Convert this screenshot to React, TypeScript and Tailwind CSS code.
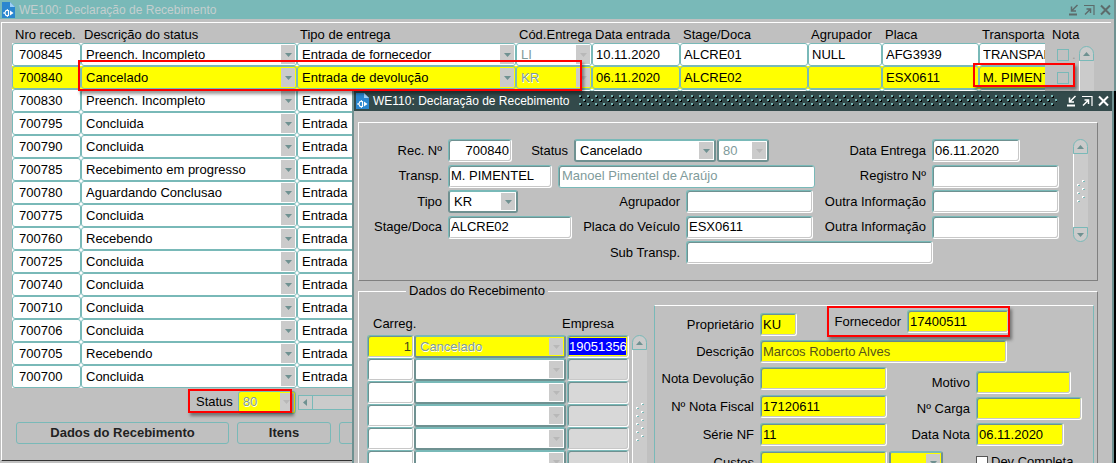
import { ReactNode } from "react";

const RECEIPTS = [
  { id: "700845", status: "Preench. Incompleto", tipo: "Entrada de fornecedor", cod: "LI", data: "10.11.2020", stage: "ALCRE01", agrupador: "NULL", placa: "AFG3939", transp: "TRANSPARANA" },
  { id: "700840", status: "Cancelado", tipo: "Entrada de devolução", cod: "KR", data: "06.11.2020", stage: "ALCRE02", agrupador: "", placa: "ESX0611", transp: "M. PIMENTEL" },
  { id: "700830", status: "Preench. Incompleto" },
  { id: "700795", status: "Concluida" },
  { id: "700790", status: "Concluida" },
  { id: "700785", status: "Recebimento em progresso" },
  { id: "700780", status: "Aguardando Conclusao" },
  { id: "700775", status: "Concluida" },
  { id: "700760", status: "Recebendo" },
  { id: "700725", status: "Concluida" },
  { id: "700740", status: "Concluida" },
  { id: "700710", status: "Concluida" },
  { id: "700706", status: "Concluida" },
  { id: "700705", status: "Recebendo" },
  { id: "700700", status: "Concluida" },
];

const COLUMNS = [
  { title: "Nro receb.", width: "w-[69px]" },
  { title: "Descrição do status", width: "w-[216px]" },
  { title: "Tipo de entrega", width: "w-[219px]" },
  { title: "Cód.Entrega", width: "w-[76px]" },
  { title: "Data entrada", width: "w-[88px]" },
  { title: "Stage/Doca", width: "w-[128px]" },
  { title: "Agrupador", width: "w-[74px]" },
  { title: "Placa", width: "w-[97px]" },
  { title: "Transportad", width: "w-[110px]" },
];

const SUNKEN =
  "rounded-[3px] border border-t-[#79b9b8] border-l-[#79b9b8] border-r-white border-b-white shadow-[inset_1px_1px_0_#6f9191,inset_-1px_-1px_0_#c8c8c8]";
const EMBOSSED = "text-[#7f9b9b] [text-shadow:1px_1px_0_#ffffff]";

function FormIcon() {
  return (
    <svg width="13" height="16" viewBox="0 0 13 16" className="shrink-0">
      <path d="M0 0H8L13 5V16H0Z" fill="#2a86cf" />
      <path d="M8 0L13 5H8Z" fill="#9fd0f5" />
      <path d="M6.5 8.5H4L2.8 11L4 13.5H6.5Z" fill="none" stroke="#fff" strokeWidth="1.2" />
      <path d="M1 11H3M5.3 7V8.5M5.3 13.5V15" stroke="#fff" strokeWidth="1" />
      <path d="M8 8.5L11.5 11L8 13.5Z" fill="#fff" />
    </svg>
  );
}

function WindowButtons({ color }: { color: string }) {
  return (
    <div className={"flex items-center gap-[5px] " + color}>
      <button aria-label="Minimizar">
        <svg width="11" height="12" viewBox="0 0 11 12" fill="none" stroke="currentColor" className="block">
          <path d="M9.5 1L4 6.5M3.5 2.5V7H8" strokeWidth="1.5" />
          <path d="M1 10.5H9" strokeWidth="2" />
        </svg>
      </button>
      <button aria-label="Restaurar">
        <svg width="11" height="12" viewBox="0 0 11 12" fill="none" stroke="currentColor" className="block">
          <path d="M0 1.5H10V11" strokeWidth="1.2" />
          <path d="M1 10.5L6 5.5M2.5 5H6.5V9" strokeWidth="1.5" />
        </svg>
      </button>
      <button aria-label="Fechar">
        <svg width="11" height="12" viewBox="0 0 11 12" fill="none" stroke="currentColor" className="block">
          <path d="M1 1.5L10 10.5M10 1.5L1 10.5" strokeWidth="2" />
        </svg>
      </button>
    </div>
  );
}

function Arrow({ faded }: { faded?: boolean }) {
  return (
    <span className="pointer-events-none my-px mr-px flex w-[14px] shrink-0 items-center justify-center bg-[#cbcbcb]">
      <svg width="7" height="4" viewBox="0 0 7 4">
        <path d="M0 0H7L3.5 4Z" fill={faded ? "#b8b8b8" : "#6f9191"} />
      </svg>
    </span>
  );
}

function Combo({ label, value, disabled, className }: { label: string; value: string; disabled?: boolean; className?: string }) {
  return (
    <span className={"flex h-[23px] " + (className ?? "")}>
      <select
        aria-label={label}
        disabled={disabled}
        defaultValue={value}
        className={"min-w-0 flex-1 appearance-none bg-transparent pl-1 opacity-100 outline-none " + (disabled ? EMBOSSED : "")}
      >
        <option>{value}</option>
      </select>
      <Arrow faded={disabled} />
    </span>
  );
}

const COMBO_FRAME = "rounded-[3px] border-2 border-[#6f9191] border-t-[#79b9b8] bg-white";

function Field({ label, value = "", labelWidth, width, yellow, right, className }: {
  label: string;
  value?: string;
  labelWidth: string;
  width: string;
  yellow?: boolean;
  right?: boolean;
  className?: string;
}) {
  return (
    <label className={"flex shrink-0 items-center gap-[6px] " + (className ?? "")}>
      <span className={"shrink-0 text-right whitespace-nowrap " + labelWidth}>{label}</span>
      <input
        defaultValue={value}
        className={
          "h-[23px] shrink-0 px-[2px] pb-px outline-none " + SUNKEN + " " + width + (yellow ? " bg-[#ffff00]" : " bg-white") + (right ? " text-right" : "")
        }
      />
    </label>
  );
}

function ScrollBar({ className, grips }: { className: string; grips: number }) {
  return (
    <div className={"flex w-[15px] shrink-0 flex-col " + className}>
      <button aria-label="Subir" className="flex h-[15px] shrink-0 items-center justify-center rounded-t-full border border-[#79b9b8] bg-[#cbcbcb]">
        <svg width="7" height="4" viewBox="0 0 7 4">
          <path d="M0 4H7L3.5 0Z" fill="#6f9191" />
        </svg>
      </button>
      <div className="flex flex-1 flex-col items-center justify-center border-l border-white bg-[#cbcbcb]">
        {Array.from({ length: grips }, (_, i) => (
          <svg key={i} width="10" height="8" viewBox="0 0 10 8">
            <path d="M6 1h2v2H6zM1 5h2v2H1z" fill="#fff" />
            <path d="M7 2h2v1H7zM2 6h2v1H2z" fill="#79b9b8" />
          </svg>
        ))}
      </div>
      <button aria-label="Descer" className="flex h-[15px] shrink-0 items-center justify-center rounded-b-full border border-[#79b9b8] bg-[#cbcbcb]">
        <svg width="7" height="4" viewBox="0 0 7 4">
          <path d="M0 0H7L3.5 4Z" fill="#6f9191" />
        </svg>
      </button>
    </div>
  );
}

function Cell({ children }: { children: ReactNode }) {
  return (
    <td className="p-0">
      <div className="h-[23px] overflow-hidden rounded-[3px] border border-[#79b9b8]">{children}</div>
    </td>
  );
}

function CellInput({ label, value = "", className = "px-[3px]" }: { label: string; value?: string; className?: string }) {
  return <input aria-label={label} defaultValue={value} className={"block h-[21px] w-full bg-transparent pb-px outline-none " + className} />;
}

function ReceiptTable() {
  return (
    <table className="w-[1077px] table-fixed border-separate border-spacing-0">
      <thead>
        <tr className="h-[16px]">
          {COLUMNS.map((c) => (
            <th key={c.title} className={"p-0 pl-[3px] text-left font-normal whitespace-nowrap " + c.width}>
              {c.title}
            </th>
          ))}
        </tr>
      </thead>
      <tbody>
        {RECEIPTS.map((r) => (
          <tr key={r.id} className={r.id === "700840" ? "bg-[#ffff00]" : "bg-white"}>
            <Cell><CellInput label="Nro receb." value={r.id} className="px-[6px]" /></Cell>
            <Cell><Combo label="Descrição do status" value={r.status} className="h-[21px]!" /></Cell>
            <Cell><Combo label="Tipo de entrega" value={r.tipo ?? "Entrada"} className="h-[21px]!" /></Cell>
            <Cell><Combo label="Cód.Entrega" value={r.cod ?? "LI"} disabled className="h-[21px]!" /></Cell>
            <Cell><CellInput label="Data entrada" value={r.data} /></Cell>
            <Cell><CellInput label="Stage/Doca" value={r.stage} /></Cell>
            <Cell><CellInput label="Agrupador" value={r.agrupador} /></Cell>
            <Cell><CellInput label="Placa" value={r.placa} /></Cell>
            <Cell><CellInput label="Transportadora" value={r.transp} /></Cell>
          </tr>
        ))}
      </tbody>
    </table>
  );
}

function ReceiptWindow() {
  const button = "h-[22px] rounded-[3px] border border-[#79b9b8] font-bold text-[#222222]";
  return (
    <section className="flex h-full flex-col bg-[#c0c0c0]">
      <header className="flex h-[19px] shrink-0 items-center bg-[#79b9b8] pr-[3px] pl-[2px] text-[12px] text-[#c4cfcf]">
        <FormIcon />
        <h1 className="flex-1 pl-[4px]">WE100: Declaração de Recebimento</h1>
        <WindowButtons color="text-[#5d6b6b]" />
      </header>
      <div className="mt-[3px] mr-[3px] mb-[2px] ml-px flex flex-1 flex-col border-t border-b border-l border-t-white border-b-[#333333] border-l-white">
        <div className="flex pt-[4px] pl-[10px]">
          <div className="min-w-0 flex-1 overflow-hidden">
            <ReceiptTable />
          </div>
          <div className="flex w-[66px] shrink-0 pl-[7px]">
            <div className="w-[27px] shrink-0">
              <div className="h-[16px]">Nota</div>
              {RECEIPTS.map((r) => (
                <label key={r.id} className="flex h-[23px] items-center pl-[5px] text-[#9a9a9a]">
                  <input type="checkbox" aria-label={"Nota " + r.id} className="size-[12px] shrink-0 appearance-none border border-[#79b9b8]" />
                  <span className="pl-[3px]">.</span>
                </label>
              ))}
            </div>
            <ScrollBar className="mt-[19px]" grips={3} />
          </div>
        </div>
        <div className="flex h-[28px] items-center pr-[66px] pl-[194px]">
          <span className="pr-[5px]">Status</span>
          <Combo label="Status" value="80" disabled className="w-[58px] shrink-0 rounded-[3px] border border-[#79b9b8] bg-[#ffff00]" />
          <div className="ml-[2px] flex h-[15px] flex-1 border border-[#79b9b8] bg-[#cbcbcb]">
            <button aria-label="Rolar para a esquerda" className="flex w-[14px] items-center justify-center border-r border-[#79b9b8]">
              <svg width="4" height="7" viewBox="0 0 4 7">
                <path d="M4 0V7L0 3.5Z" fill="#6f9191" />
              </svg>
            </button>
          </div>
        </div>
        <div className="flex gap-[8px] pt-[6px] pl-[14px]">
          <button className={button + " w-[213px]"}>Dados do Recebimento</button>
          <button className={button + " w-[94px]"}>Itens</button>
          <button aria-label="Detalhes" className={button + " w-[213px]"} />
        </div>
      </div>
    </section>
  );
}

function HeaderPanel() {
  return (
    <div className="flex gap-[14px] border border-t-white border-r-[#808080] border-b-[#808080] border-l-white pt-[16px] pr-[9px] pb-[16px]">
      <div className="flex h-[125px] min-w-0 flex-1 flex-col justify-between">
        <div className="flex">
          <Field label="Rec. Nº" value="700840" labelWidth="w-[83px]" width="w-[64px]" right />
          <span className="w-[62px] self-center pr-[6px] text-right">Status</span>
          <Combo label="Status" value="Cancelado" className={COMBO_FRAME + " w-[142px]"} />
          <Combo label="Código do status" value="80" disabled className={COMBO_FRAME + " ml-px w-[52px]"} />
          <Field label="Data Entrega" value="06.11.2020" labelWidth="w-[120px]" width="w-[88px]" className="ml-auto pr-[39px]" />
        </div>
        <div className="flex">
          <Field label="Transp." value="M. PIMENTEL" labelWidth="w-[83px]" width="w-[104px]" />
          <input
            aria-label="Nome da transportadora"
            disabled
            value="Manoel Pimentel de Araújo"
            className="ml-[6px] h-[23px] w-[257px] rounded-[3px] border border-[#79b9b8] bg-white px-[3px] pb-px text-[#7f9b9b] shadow-[inset_1px_1px_0_#6f9191]"
          />
          <Field label="Registro Nº" labelWidth="w-[107px]" width="w-[127px]" className="ml-auto" />
        </div>
        <div className="flex">
          <span className="w-[89px] self-center pr-[6px] text-right">Tipo</span>
          <Combo label="Tipo" value="KR" className={COMBO_FRAME + " w-[70px]"} />
          <Field label="Agrupador" labelWidth="w-[162px]" width="w-[127px]" />
          <Field label="Outra Informação" labelWidth="w-[107px]" width="w-[127px]" className="ml-auto" />
        </div>
        <div className="flex">
          <Field label="Stage/Doca" value="ALCRE02" labelWidth="w-[83px]" width="w-[124px]" />
          <Field label="Placa do Veículo" value="ESX0611" labelWidth="w-[108px]" width="w-[127px]" />
          <Field label="Outra Informação" labelWidth="w-[107px]" width="w-[127px]" className="ml-auto" />
        </div>
        <Field label="Sub Transp." labelWidth="w-[321px]" width="w-[247px]" />
      </div>
      <ScrollBar className="h-[103px]" grips={3} />
    </div>
  );
}

function LoadTable() {
  return (
    <table className="w-[262px] shrink-0 table-fixed border-separate border-spacing-0">
      <colgroup>
        <col className="w-[47px]" />
        <col className="w-[153px]" />
        <col className="w-[62px]" />
      </colgroup>
      <thead>
        <tr className="h-[36px] align-bottom">
          <th className="p-0 pb-[3px] pl-[6px] text-left font-normal">Carreg.</th>
          <th colSpan={2} className="p-0 pr-[15px] pb-[3px] text-right font-normal">Empresa</th>
        </tr>
      </thead>
      <tbody>
        {[0, 1, 2, 3, 4, 5, 6].map((i) => (
          <tr key={i}>
            <td className="p-0">
              <input
                aria-label="Carreg."
                defaultValue={i === 0 ? "1" : ""}
                className={"block h-[23px] w-full px-[2px] text-right outline-none " + SUNKEN + (i === 0 ? " bg-[#ffff00] text-[#44441a]" : " bg-white")}
              />
            </td>
            <td className="p-0">
              <Combo label="Status do carregamento" value={i === 0 ? "Cancelado" : ""} disabled className={"mr-px " + COMBO_FRAME + (i === 0 ? " bg-[#ffff00]!" : "")} />
            </td>
            <td className="p-0">
              <div className={"h-[23px] p-[2px] pl-px " + SUNKEN + (i === 0 ? " bg-[#ffff00]" : " bg-[#d8d8d8]")}>
                <input
                  aria-label="Empresa"
                  defaultValue={i === 0 ? "19051356" : ""}
                  className={"block h-[17px] w-full outline-none " + (i === 0 ? "bg-[#0000ff] text-white" : "bg-transparent")}
                />
              </div>
            </td>
          </tr>
        ))}
      </tbody>
    </table>
  );
}

function SupplierPanel() {
  return (
    <div className="mt-[6px] mr-[3px] flex min-w-0 flex-1 flex-col gap-[4px] border border-[#79b9b8] border-t-white pt-[4px]">
      <div className="flex h-[26px]">
        <Field label="Proprietário" value="KU" labelWidth="w-[99px]" width="w-[37px]" yellow className="self-end" />
        <Field label="Fornecedor" value="17400511" labelWidth="w-[104px]" width="w-[102px]" yellow className="self-start" />
      </div>
      <label className="flex items-center gap-[6px]">
        <span className="w-[99px] text-right">Descrição</span>
        <input disabled value="Marcos Roberto Alves" className={"h-[23px] w-[247px] bg-[#ffff00] px-[2px] pb-px text-[#55551a] " + SUNKEN} />
      </label>
      <div className="flex">
        <div className="flex w-[232px] shrink-0 flex-col gap-[5px]">
          <Field label="Nota Devolução" labelWidth="w-[99px]" width="w-[127px]" yellow />
          <Field label="Nº Nota Fiscal" value="17120611" labelWidth="w-[99px]" width="w-[127px]" yellow />
          <Field label="Série NF" value="11" labelWidth="w-[99px]" width="w-[127px]" yellow />
          <div className="flex gap-[2px]">
            <Field label="Custos" labelWidth="w-[99px]" width="w-[127px]" yellow />
            <Combo label="Moeda" value="" className={COMBO_FRAME + " w-[54px] shrink-0 bg-[#ffff00]!"} />
          </div>
        </div>
        <div className="flex flex-col gap-[3px] pt-[4px]">
          <Field label="Motivo" labelWidth="w-[83px]" width="w-[95px]" yellow />
          <Field label="Nº Carga" labelWidth="w-[83px]" width="w-[106px]" yellow />
          <Field label="Data Nota" value="06.11.2020" labelWidth="w-[83px]" width="w-[88px]" yellow />
          <label className="flex items-center gap-[3px] self-start pt-[5px] pl-[89px] whitespace-nowrap">
            <input type="checkbox" className="size-[12px] shrink-0 appearance-none border border-[#555555] bg-white" />
            Dev Completa
          </label>
        </div>
      </div>
    </div>
  );
}

function DetailWindow() {
  return (
    <section className="absolute top-[91px] right-[2px] bottom-0 left-[352px] overflow-hidden border-r-2 border-l-2 border-[#6f9191] bg-[#c0c0c0] shadow-[2px_0_0_#000000]">
      <header className="flex h-[20px] items-center bg-[#334a4b] pr-[3px] pl-[2px] text-[12px] text-white">
        <FormIcon />
        <h2 className="pl-[4px]">WE110: Declaração de Recebimento</h2>
        <svg className="mx-[9px] h-[12px] min-w-0 flex-1">
          <defs>
            <pattern id="grip" width="8" height="8" patternUnits="userSpaceOnUse">
              <path d="M1 1h2v2H1zM5 5h2v2H5z" fill="#000" />
              <path d="M0 0h2v2H0zM4 4h2v2H4z" fill="#79b9b8" />
            </pattern>
          </defs>
          <rect width="100%" height="12" fill="url(#grip)" />
        </svg>
        <WindowButtons color="text-white" />
      </header>
      <div className="pt-[11px] pr-[14px] pl-[4px]">
        <HeaderPanel />
        <fieldset className="mt-[2px] min-w-0 border border-t-white border-r-[#808080] border-b-[#808080] border-l-white pb-[12px]">
          <legend className="ml-[47px] px-[3px] leading-[16px]">Dados do Recebimento</legend>
          <div className="flex items-start pl-[8px]">
            <LoadTable />
            <ScrollBar className="mt-[36px] mr-[7px] ml-[3px] h-[174px]" grips={5} />
            <SupplierPanel />
          </div>
        </fieldset>
      </div>
    </section>
  );
}

function Highlight({ place }: { place: string }) {
  return <div className={"pointer-events-none absolute border-2 border-[#ff0000] shadow-[2px_3px_3px_rgba(0,0,0,0.4)] " + place} />;
}

export default function App() {
  return (
    <main className="relative h-screen overflow-hidden bg-[#6f9191] pr-[2px] font-['Liberation_Sans',Arial,sans-serif] text-[13px] leading-[16px] text-black">
      <ReceiptWindow />
      <DetailWindow />
      <Highlight place="top-[60px] left-[78px] h-[31px] w-[504px]" />
      <Highlight place="top-[63px] left-[973px] h-[24px] w-[102px]" />
      <Highlight place="top-[389px] left-[188px] h-[24px] w-[104px]" />
      <Highlight place="top-[306px] left-[827px] h-[31px] w-[183px]" />
    </main>
  );
}
